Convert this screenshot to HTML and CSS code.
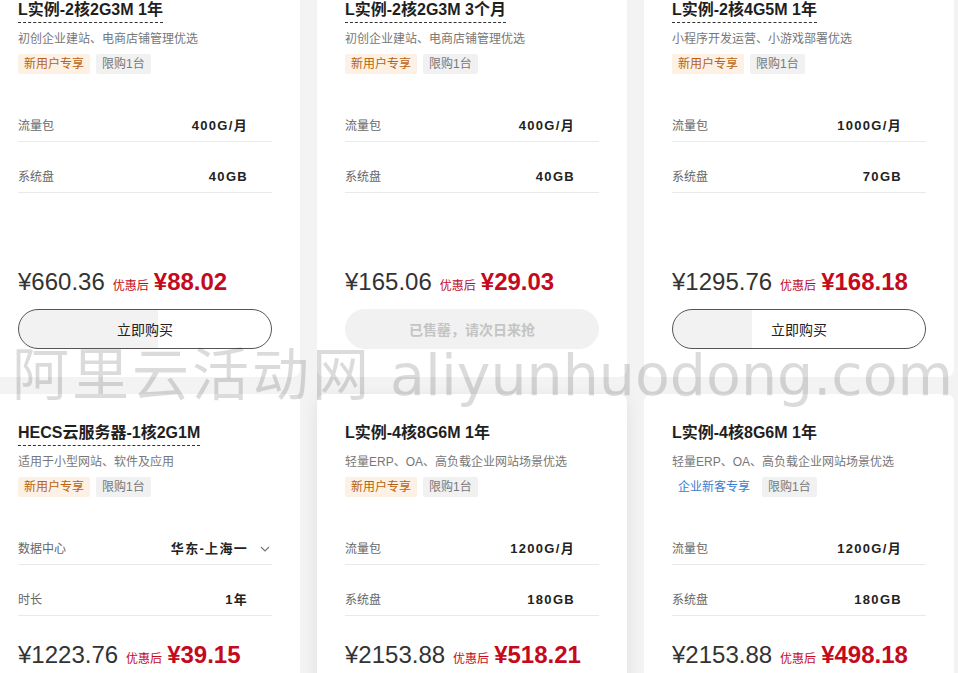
FILE: index.html
```html
<!DOCTYPE html>
<html lang="zh-CN">
<head>
  <meta charset="UTF-8">
  <meta name="viewport" content="width=device-width, initial-scale=1.0">
  <title>云服务器特惠</title>
  <link rel="stylesheet" href="styles.css">
</head>
<body>

  <div class="page">
    <div class="grid">

      <!-- 第一行 -->
      <div class="card">
        <div class="title"><span class="dashed">L实例-2核2G3M 1年</span></div>
        <p class="desc">初创企业建站、电商店铺管理优选</p>
        <div class="tags">
          <span class="tag tag-new">新用户专享</span>
          <span class="tag tag-limit">限购1台</span>
        </div>
        <ul class="specs specs-tall">
          <li class="spec"><span class="label">流量包</span><span class="value">400G/月</span></li>
          <li class="spec"><span class="label">系统盘</span><span class="value">40GB</span></li>
        </ul>
        <div class="price">
          <span class="orig">¥660.36</span>
          <span class="after">优惠后</span>
          <span class="final">¥88.02</span>
        </div>
        <button class="buy" style="--fill: 139px">立即购买</button>
      </div>

      <div class="card">
        <div class="title"><span class="dashed">L实例-2核2G3M 3个月</span></div>
        <p class="desc">初创企业建站、电商店铺管理优选</p>
        <div class="tags">
          <span class="tag tag-new">新用户专享</span>
          <span class="tag tag-limit">限购1台</span>
        </div>
        <ul class="specs specs-tall">
          <li class="spec"><span class="label">流量包</span><span class="value">400G/月</span></li>
          <li class="spec"><span class="label">系统盘</span><span class="value">40GB</span></li>
        </ul>
        <div class="price">
          <span class="orig">¥165.06</span>
          <span class="after">优惠后</span>
          <span class="final">¥29.03</span>
        </div>
        <button class="buy sold" disabled>已售罄，请次日来抢</button>
      </div>

      <div class="card">
        <div class="title"><span class="dashed">L实例-2核4G5M 1年</span></div>
        <p class="desc">小程序开发运营、小游戏部署优选</p>
        <div class="tags">
          <span class="tag tag-new">新用户专享</span>
          <span class="tag tag-limit">限购1台</span>
        </div>
        <ul class="specs specs-tall">
          <li class="spec"><span class="label">流量包</span><span class="value">1000G/月</span></li>
          <li class="spec"><span class="label">系统盘</span><span class="value">70GB</span></li>
        </ul>
        <div class="price">
          <span class="orig">¥1295.76</span>
          <span class="after">优惠后</span>
          <span class="final">¥168.18</span>
        </div>
        <button class="buy" style="--fill: 79px">立即购买</button>
      </div>

      <!-- 第二行 -->
      <div class="card">
        <div class="title"><span class="dashed">HECS云服务器-1核2G1M</span></div>
        <p class="desc">适用于小型网站、软件及应用</p>
        <div class="tags">
          <span class="tag tag-new">新用户专享</span>
          <span class="tag tag-limit">限购1台</span>
        </div>
        <ul class="specs">
          <li class="spec spec-select">
            <span class="label">数据中心</span>
            <span class="value">华东-上海一</span>
            <svg class="chevron" viewBox="0 0 10 6" width="10" height="6"><polyline points="1,1 5,5 9,1" /></svg>
          </li>
          <li class="spec"><span class="label">时长</span><span class="value">1年</span></li>
        </ul>
        <div class="price">
          <span class="orig">¥1223.76</span>
          <span class="after">优惠后</span>
          <span class="final">¥39.15</span>
        </div>
        <button class="buy">立即购买</button>
      </div>

      <div class="card card-hover">
        <div class="title"><span>L实例-4核8G6M 1年</span></div>
        <p class="desc">轻量ERP、OA、高负载企业网站场景优选</p>
        <div class="tags">
          <span class="tag tag-new">新用户专享</span>
          <span class="tag tag-limit">限购1台</span>
        </div>
        <ul class="specs">
          <li class="spec"><span class="label">流量包</span><span class="value">1200G/月</span></li>
          <li class="spec"><span class="label">系统盘</span><span class="value">180GB</span></li>
        </ul>
        <div class="price">
          <span class="orig">¥2153.88</span>
          <span class="after">优惠后</span>
          <span class="final">¥518.21</span>
        </div>
        <button class="buy">立即购买</button>
      </div>

      <div class="card">
        <div class="title"><span>L实例-4核8G6M 1年</span></div>
        <p class="desc">轻量ERP、OA、高负载企业网站场景优选</p>
        <div class="tags">
          <span class="tag tag-biz">企业新客专享</span>
          <span class="tag tag-limit">限购1台</span>
        </div>
        <ul class="specs">
          <li class="spec"><span class="label">流量包</span><span class="value">1200G/月</span></li>
          <li class="spec"><span class="label">系统盘</span><span class="value">180GB</span></li>
        </ul>
        <div class="price">
          <span class="orig">¥2153.88</span>
          <span class="after">优惠后</span>
          <span class="final">¥498.18</span>
        </div>
        <button class="buy">立即购买</button>
      </div>

    </div>

    <div class="watermark"><span class="wm-cn">阿里云活动网</span> aliyunhuodong.com</div>
  </div>

</body>
</html>
```

FILE: styles.css
```css
/* Reset */
* {
  margin: 0;
  padding: 0;
  box-sizing: border-box;
}

html,
body {
  height: 100%;
  overflow: hidden;
}

body {
  font-family: 'Liberation Sans', 'Noto Sans CJK SC', sans-serif;
  background-color: #f3f3f3;
  color: #222;
}

.page {
  position: relative;
  display: flow-root;
  height: 100%;
}

/* Grade de cartões */
.grid {
  display: grid;
  grid-template-columns: repeat(3, 310px);
  gap: 17px;
  margin: -29px 0 0 -10px;
}

.card {
  background-color: #fff;
  border-radius: 8px;
  padding: 28px;
}

.card-hover {
  box-shadow: 0 4px 18px rgba(0, 0, 0, 0.08);
}

/* Título */
.title {
  font-size: 16px;
  font-weight: bold;
  color: #1f1f1f;
}

.title span {
  display: inline-block;
  line-height: 22px;
  padding-bottom: 1px;
  border-bottom: 1px dashed transparent;
}

.title .dashed {
  border-bottom-color: #333;
}

.desc {
  margin-top: 6px;
  font-size: 12px;
  line-height: 20px;
  color: #777;
}

/* Etiquetas */
.tags {
  margin-top: 5px;
  display: flex;
  gap: 6px;
}

.tag {
  font-size: 12px;
  line-height: 20px;
  padding: 0 6px;
  border-radius: 2px;
}

.tag-new {
  background-color: #fcf1e4;
  color: #b8620f;
}

.tag-limit {
  background-color: #f1f1f1;
  color: #777;
}

.tag-biz {
  color: #3a7ccf;
}

/* Especificações */
.specs {
  list-style: none;
  margin-top: 17px;
}

.specs-tall {
  min-height: 152px;
}

.spec {
  display: flex;
  align-items: center;
  padding: 25px 24px 5px 0;
  line-height: 20px;
  border-bottom: 1px solid #e9e9e9;
}

.spec .label {
  font-size: 12px;
  color: #666;
}

.spec .value {
  margin-left: auto;
  font-size: 13px;
  font-weight: bold;
  letter-spacing: 1.3px;
  color: #222;
}

.spec-select {
  padding-right: 2px;
}

.chevron {
  margin-left: 12px;
  fill: none;
  stroke: #777;
  stroke-width: 1.2;
}

/* Preço */
.price {
  margin-top: 23px;
  height: 32px;
  display: flex;
  align-items: baseline;
  line-height: 32px;
}

.orig {
  font-size: 24px;
  color: #333;
}

.after {
  margin-left: 8px;
  font-size: 12px;
  color: #c40a1c;
}

.final {
  margin-left: 5px;
  font-size: 24px;
  font-weight: bold;
  color: #c40a1c;
}

/* Botão */
.buy {
  display: block;
  width: 100%;
  height: 40px;
  margin-top: 11px;
  border: 1px solid #555;
  border-radius: 20px;
  background: linear-gradient(to right, #f2f2f2 var(--fill, 0px), #fff var(--fill, 0px));
  font-family: inherit;
  font-size: 14px;
  color: #222;
  cursor: pointer;
}

.buy.sold {
  background: #f1f1f1;
  border-color: #f1f1f1;
  color: #c4c4c4;
  font-weight: bold;
  cursor: default;
}

/* Marca d'água */
.watermark {
  position: absolute;
  top: 347px;
  left: 12px;
  font-family: 'DejaVu Sans', 'Noto Sans CJK SC', sans-serif;
  font-size: 57px;
  line-height: 1;
  white-space: nowrap;
  color: rgba(0, 0, 0, 0.14);
  pointer-events: none;
}

.wm-cn {
  letter-spacing: 3px;
}
```
